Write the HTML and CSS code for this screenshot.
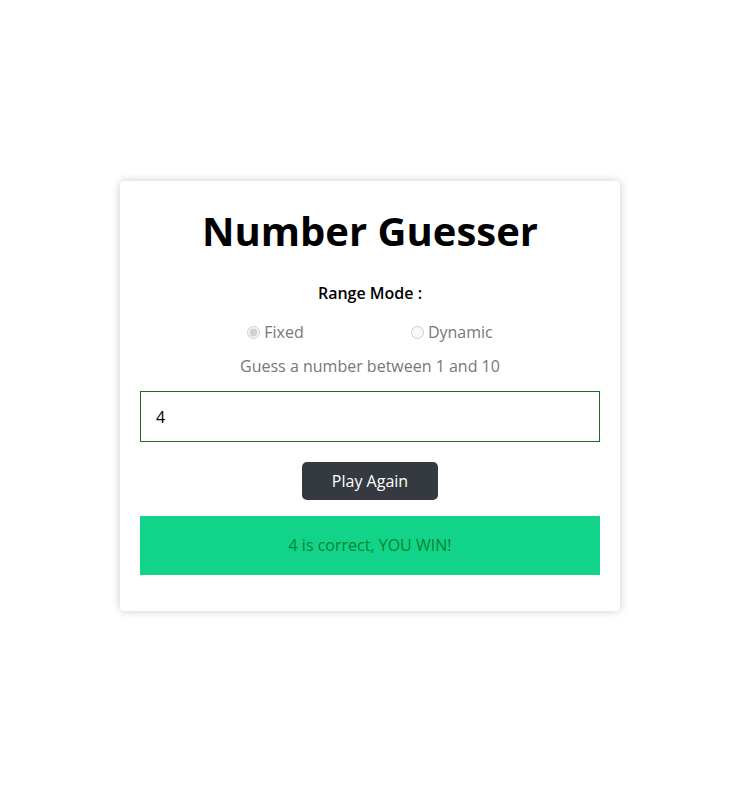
FILE: index.html
```html
<!DOCTYPE html>
<html lang="en">
<head>
<meta charset="utf-8">
<meta name="viewport" content="width=device-width, initial-scale=1">
<title>Number Guesser</title>
<link rel="stylesheet" href="styles.css">
</head>
<body>
<main class="card">
  <h1 class="title">Number Guesser</h1>
  <form class="game">
    <fieldset class="modes">
      <legend class="modes-title">Range Mode :</legend>
      <div class="modes-options">
        <label class="mode"><input type="radio" name="mode" checked disabled>Fixed</label>
        <label class="mode"><input type="radio" name="mode" disabled>Dynamic</label>
      </div>
    </fieldset>
    <label class="hint" for="guess">Guess a number between 1 and 10</label>
    <input class="guess" id="guess" type="text" inputmode="numeric" value="4">
    <button class="play" type="button">Play Again</button>
    <p class="message" role="status">4 is correct, YOU WIN!</p>
  </form>
</main>
</body>
</html>
```
FILE: styles.css
```css
* {
  box-sizing: border-box;
}

body {
  margin: 0;
  min-height: 100vh;
  display: flex;
  align-items: center;
  justify-content: center;
  background: #fff;
  color: #777;
  font: 16px/24px "Open Sans", sans-serif;
}

.card {
  width: 100%;
  max-width: 500px;
  padding: 20px 20px 36px;
  border-radius: 4px;
  background: #fff;
  box-shadow: 0 0 10px rgba(0, 0, 0, 0.2);
}

.title {
  margin: 0 0 20px;
  color: #000;
  font-size: 40px;
  line-height: 60px;
  text-align: center;
}

.game {
  display: flex;
  flex-direction: column;
  align-items: center;
}

.modes {
  width: 100%;
  margin: 0;
  padding: 0;
  border: 0;
}

.modes-title {
  width: 100%;
  padding: 0;
  color: #000;
  font-weight: 600;
  text-align: center;
}

.modes-options {
  display: flex;
  justify-content: space-evenly;
  padding-top: 15px;
}

.mode {
  display: flex;
  align-items: center;
  gap: 4px;
}

.mode input {
  width: 13px;
  height: 13px;
  margin: 0;
}

.hint {
  margin: 10px 0 13px;
}

.guess {
  width: 100%;
  height: 51px;
  padding: 0 15px;
  border: 1px solid #1a6e23;
  background: #fff;
  color: #000;
  font: inherit;
}

.play {
  margin: 20px 0 16px;
  padding: 7px 30px;
  border: 0;
  border-radius: 5px;
  background: #343a40;
  color: #fff;
  font: inherit;
}

.message {
  width: 100%;
  margin: 0;
  padding: 18px;
  background: #12d38a;
  color: #08852c;
  line-height: 23px;
  text-align: center;
}
```
